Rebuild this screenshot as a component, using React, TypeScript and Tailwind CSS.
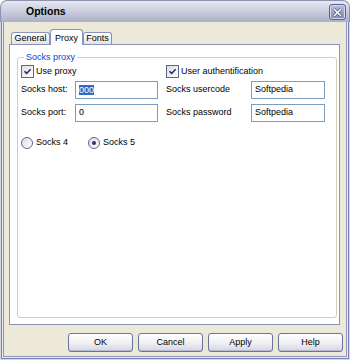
import React from "react";

// Windows XP (silver) style "Options" dialog, Proxy tab

function Checkbox({ checked }: { checked?: boolean }) {
  return (
    <span className="w-[13px] h-[13px] shrink-0 border border-[#5d6691] bg-linear-to-br from-[#dcdce4] to-white flex items-center justify-center">
      {checked && (
        <svg width="9" height="9" viewBox="0 0 9 9">
          <path d="M1.5 4.3 L3.6 6.4 L7.6 2.3" fill="none" stroke="#1f2a5c" strokeWidth="1.5" />
        </svg>
      )}
    </span>
  );
}

function Radio({ checked }: { checked?: boolean }) {
  return (
    <span className="w-[12px] h-[12px] shrink-0 rounded-full border border-[#5d6691] bg-linear-to-br from-[#dcdce4] to-white flex items-center justify-center">
      {checked && <span className="w-[4px] h-[4px] rounded-full bg-[#2c3466]" />}
    </span>
  );
}

function Field({ className, children }: { className: string; children: React.ReactNode }) {
  return (
    <div className={`${className} h-[18px] border border-[#7f9db9] bg-white flex items-center pl-[3px]`}>
      {children}
    </div>
  );
}

function Tab({ label, width, active }: { label: string; width: string; active?: boolean }) {
  if (active) {
    return (
      <div className={`${width} h-[16px] -mb-px relative z-10 border border-b-0 border-[#8c93b8] rounded-t-[3px] bg-white flex items-start justify-center pt-[2px]`}>
        {label}
      </div>
    );
  }
  return (
    <div className={`${width} h-[12px] border border-b-0 border-[#8c93b8] rounded-t-[3px] bg-linear-to-b from-white to-[#e2e3ea] flex items-center justify-center`}>
      {label}
    </div>
  );
}

function Button({ label }: { label: string }) {
  return (
    <button className="w-[65px] h-[19px] border border-[#6e7499] rounded-[3px] bg-linear-to-b from-white via-[#f1f1f5] to-[#d4d5e0] shadow-[inset_0_-1px_0_#b9bbd2] text-black">
      {label}
    </button>
  );
}

export default function App() {
  return (
    <div className="w-[350px] h-[360px] flex flex-col font-['Liberation_Sans',Arial,sans-serif] text-[9px] text-black select-none">
      {/* title bar */}
      <div className="h-[22px] shrink-0 flex items-center rounded-t-[7px] border border-b-0 border-[#8c91b0] bg-linear-to-b from-[#e6e8f0] via-[#c9cddd] to-[#aab0c7]">
        <span className="pl-[25px] font-bold text-[10.5px] leading-none">Options</span>
        <div className="ml-auto mr-[3px] mt-[1px] w-[17px] h-[16px] rounded-[3px] border border-[#5c628f] bg-linear-to-b from-[#b9bfdc] to-[#8089ba] shadow-[inset_0_0_0_1px_#d5d9ee] flex items-center justify-center">
          <svg width="11" height="11" viewBox="0 0 11 11">
            <path d="M2 2 L9 9 M9 2 L2 9" stroke="#4a5080" strokeWidth="3" />
            <path d="M2 2 L9 9 M9 2 L2 9" stroke="#ffffff" strokeWidth="1.6" />
          </svg>
        </div>
      </div>

      {/* window frame */}
      <div className="flex-1 flex flex-col border-x border-b border-[#d5d7e3]">
        <div className="flex-1 flex flex-col border-x border-b border-[#7a80b2]">
          <div className="flex-1 flex flex-col border-x border-b border-[#eaebf2]">
            <div className="flex-1 flex flex-col border-x border-b border-[#8f95c1] bg-[#ece9d8] pl-[5px] pr-[3px] pt-[7px] pb-[4px]">
              {/* tabs */}
              <div className="h-[15px] flex items-end pl-[2px]">
                <Tab label="General" width="w-[39px]" />
                <Tab label="Proxy" width="w-[33px]" active />
                <Tab label="Fonts" width="w-[29px]" />
              </div>

              {/* tab page */}
              <div className="flex-1 flex flex-col border border-[#8c93b8] bg-white mr-[3px] pl-[7px] pr-[2px] pt-[6px] pb-[6px]">
                <fieldset className="flex-1 min-w-0 border border-[#d0d0bf] rounded-[3px] px-[3px]">
                  <legend className="ml-[3px] px-[2px] text-[#0046d5] leading-[12px]">Socks proxy</legend>

                  <div className="flex items-center h-[13px] mt-[2px]">
                    <label className="w-[145px] flex items-center gap-[2px]">
                      <Checkbox checked />
                      Use proxy
                    </label>
                    <label className="flex items-center gap-[2px]">
                      <Checkbox checked />
                      User authentification
                    </label>
                  </div>

                  <div className="grid grid-cols-[54px_91px_85px_74px] items-center gap-y-[5px] mt-[3px]">
                    <span>Socks host:</span>
                    <Field className="w-[83px]">
                      <span className="bg-[#316ac5] text-white leading-[10px]">000</span>
                    </Field>
                    <span>Socks usercode</span>
                    <Field className="w-[74px]">Softpedia</Field>

                    <span>Socks port:</span>
                    <Field className="w-[83px]">0</Field>
                    <span>Socks password</span>
                    <Field className="w-[74px]">Softpedia</Field>
                  </div>

                  <div className="flex items-center mt-[14px]">
                    <label className="w-[67px] flex items-center gap-[3px]">
                      <Radio />
                      Socks 4
                    </label>
                    <label className="flex items-center gap-[3px]">
                      <Radio checked />
                      Socks 5
                    </label>
                  </div>
                </fieldset>
              </div>

              {/* buttons */}
              <div className="flex justify-end gap-[5px] mt-[8px]">
                <Button label="OK" />
                <Button label="Cancel" />
                <Button label="Apply" />
                <Button label="Help" />
              </div>
            </div>
          </div>
        </div>
      </div>
    </div>
  );
}
